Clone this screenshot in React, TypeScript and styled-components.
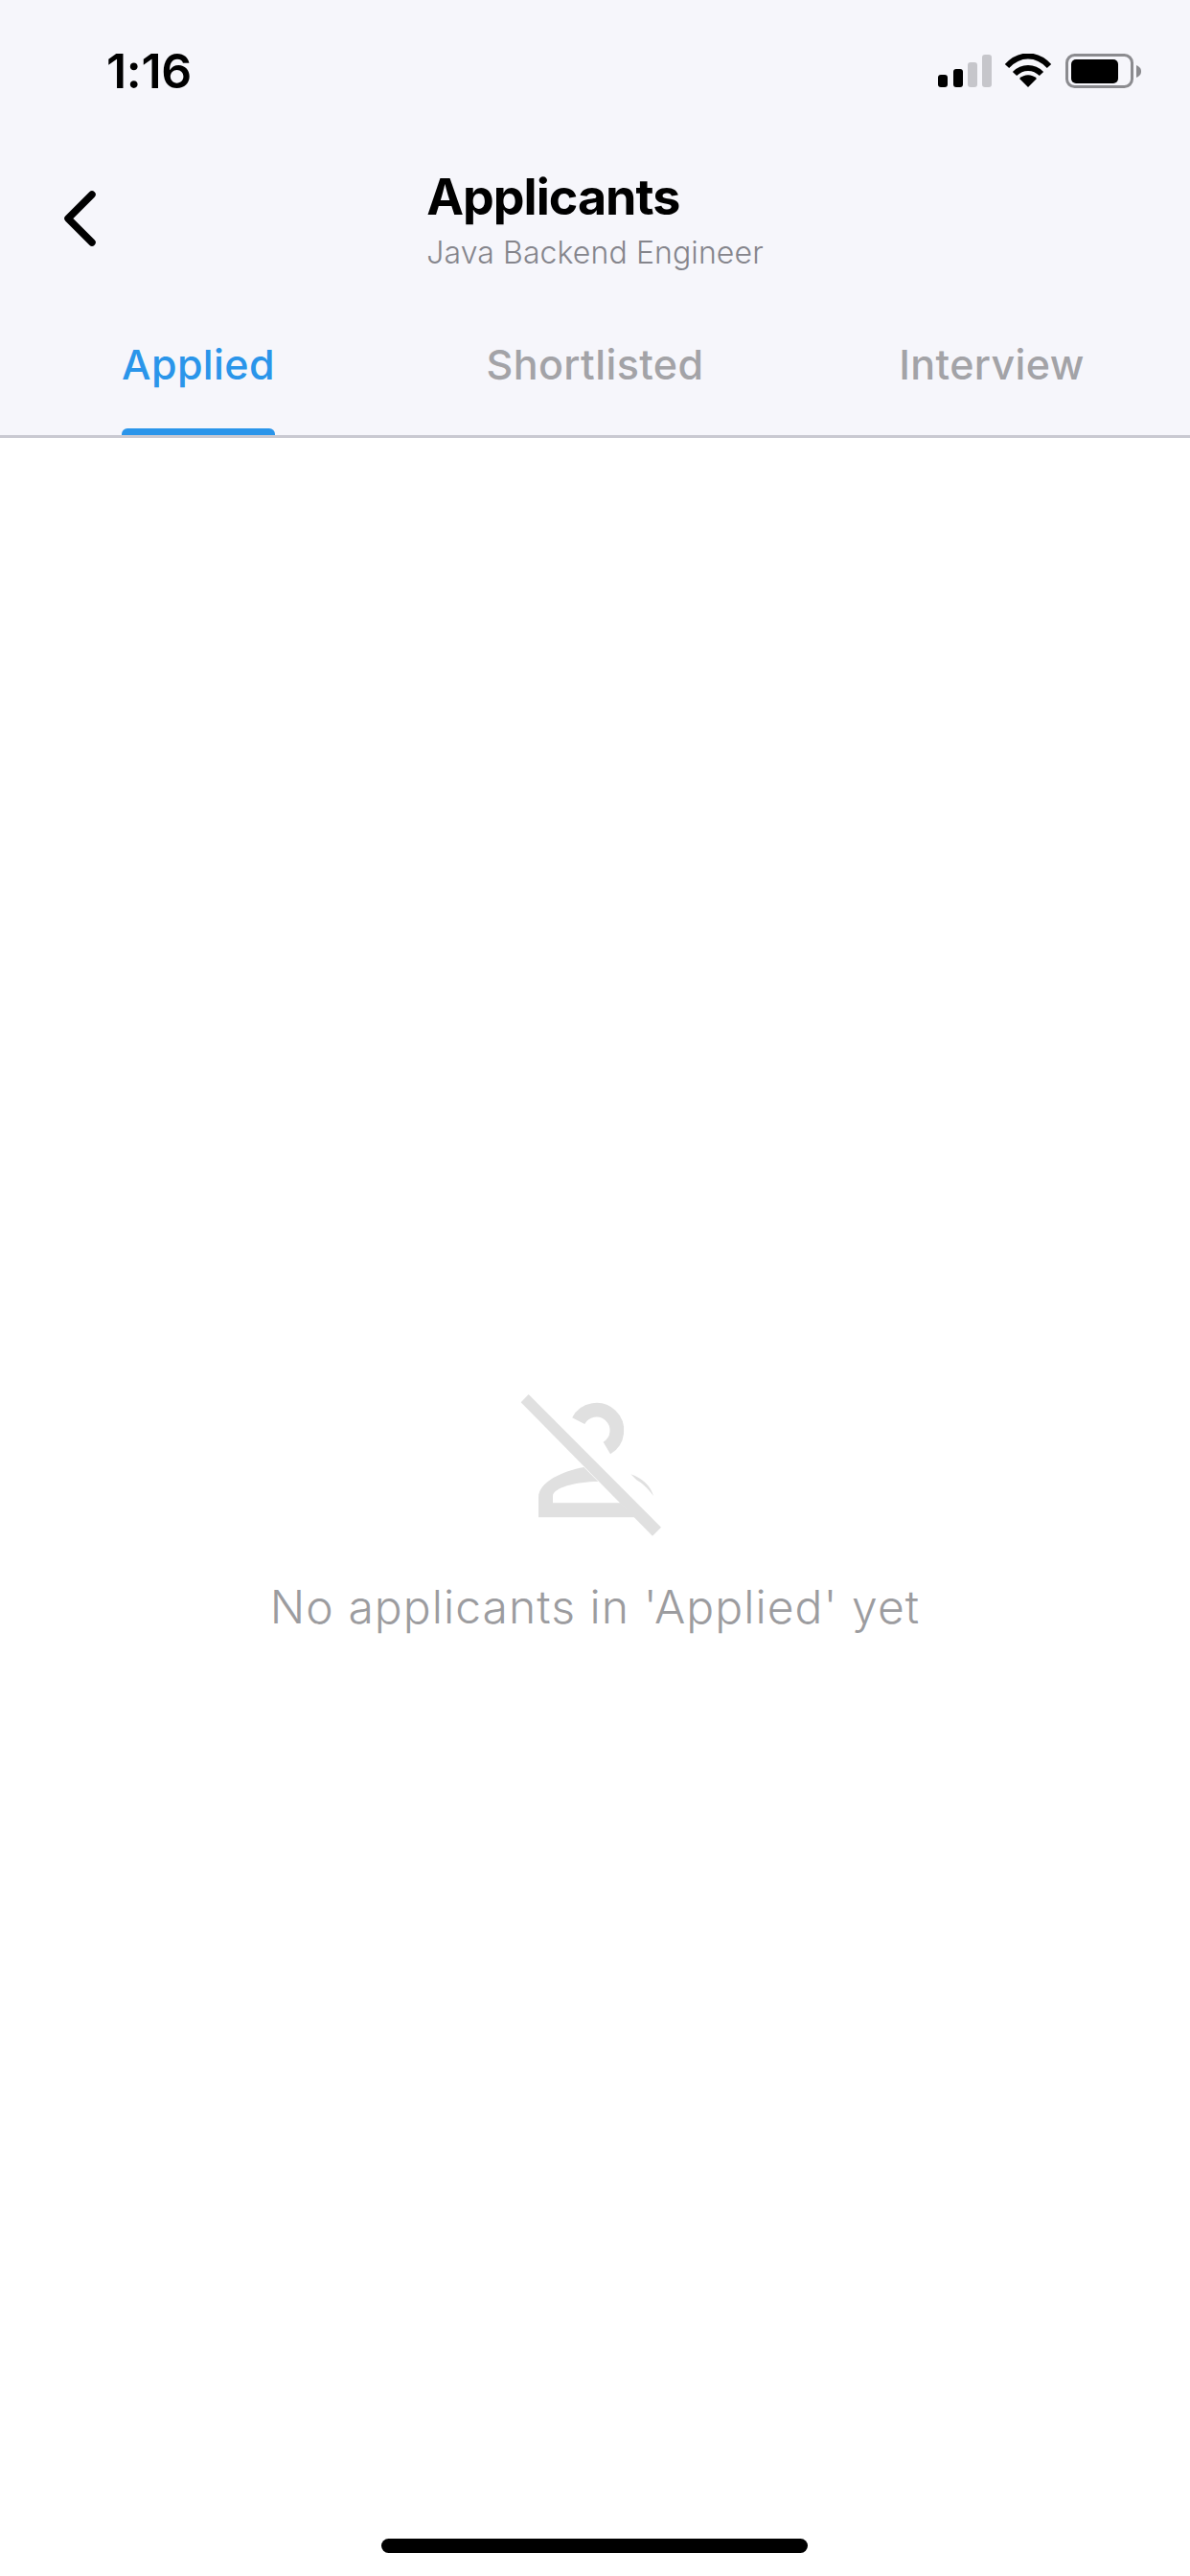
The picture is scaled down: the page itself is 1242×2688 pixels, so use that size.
import React from "react";
import styled, { createGlobalStyle } from "styled-components";

const Global = createGlobalStyle`
  html, body { margin: 0; padding: 0; background: #fff; }
  * { box-sizing: border-box; }
  #root { width: 1242px; height: 2688px; }
`;

const FONT = `Inter, "Liberation Sans", sans-serif`;

const Screen = styled.div`
  position: relative;
  width: 1242px;
  height: 2688px;
  display: flex;
  flex-direction: column;
  background: #fff;
  font-family: ${FONT};
  overflow: hidden;
`;
const Header = styled.header`
  display: flex;
  flex-direction: column;
  background: #f6f6fb;
  border-bottom: 3px solid #c9c9d1;
`;
const StatusBar = styled.div`
  height: 120px;
  display: flex;
  align-items: flex-start;
  justify-content: space-between;
  padding: 46px 51px 0 111px;
`;
const Time = styled.span`
  font-size: 50px;
  line-height: 56px;
  font-weight: 600;
  color: #000;
  letter-spacing: -0.3px;
`;
const StatusIcons = styled.svg`
  display: block;
  margin-top: 10px;
`;
const NavBar = styled.div`
  height: 216px;
  display: grid;
  grid-template-columns: 1fr auto 1fr;
  align-items: start;
`;
const BackButton = styled.div`
  padding: 78px 0 0 65px;
`;
const TitleBlock = styled.div`
  display: flex;
  flex-direction: column;
  padding-top: 56px;
`;
const Title = styled.h1`
  margin: 0;
  font-size: 52px;
  line-height: 60px;
  font-weight: 700;
  color: #000;
  letter-spacing: -1px;
`;
const Subtitle = styled.div`
  margin-top: 9px;
  font-size: 32px;
  line-height: 38px;
  font-weight: 300;
  color: #85858c;
  letter-spacing: 0.1px;
`;
const Tabs = styled.nav`
  height: 118px;
  display: grid;
  grid-template-columns: repeat(3, 1fr);
`;
const Tab = styled.div`
  display: flex;
  justify-content: center;
`;
const TabLabel = styled.div<{ $active?: boolean }>`
  position: relative;
  height: 118px;
  padding-top: 19px;
  font-size: 43px;
  line-height: 50px;
  font-weight: 500;
  letter-spacing: 0.4px;
  color: ${(p) => (p.$active ? "#2a95ea" : "#a3a3a7")};
  ${(p) =>
    p.$active &&
    `&::after {
      content: "";
      position: absolute;
      left: 0;
      right: 0;
      bottom: 0;
      height: 7px;
      border-radius: 6px 6px 0 0;
      background: #2a95ea;
    }`}
`;
const Body = styled.main`
  flex: 1;
  display: flex;
  flex-direction: column;
  align-items: center;
  padding-top: 974px;
`;
const EmptyIcon = styled.svg`
  display: block;
`;
const EmptyText = styled.p`
  margin: 18px 0 0;
  font-size: 48px;
  line-height: 56px;
  font-weight: 300;
  color: #9c9c9f;
  letter-spacing: 1.05px;
`;
const HomeIndicator = styled.div`
  position: absolute;
  left: 398px;
  bottom: 24px;
  width: 445px;
  height: 15px;
  border-radius: 8px;
  background: #000;
`;
const BackIcon = styled.svg`
  display: block;
`;

export default function App() {
  return (
    <Screen>
      <Global />
      <Header>
        <StatusBar>
          <Time>1:16</Time>
          <StatusIcons width="212" height="36" viewBox="979 56 212 36">
            <rect x="979" y="78" width="10" height="13" rx="3" fill="#000" />
            <rect x="995" y="72" width="10" height="19" rx="3" fill="#000" />
            <rect x="1010" y="65" width="10" height="26" rx="3" fill="#c6c6cb" />
            <rect x="1025" y="57" width="10" height="34" rx="3" fill="#c6c6cb" />
            <path d="M1051 69 C1064 55 1082 55 1095 69" fill="none" stroke="#000" strokeWidth="6" />
            <path d="M1059 77 C1067 69 1079 69 1087 77" fill="none" stroke="#000" strokeWidth="6" />
            <path d="M1064 82 C1069 77 1077 77 1082 82 L1073 91 Z" fill="#000" />
            <rect x="1113.5" y="57.5" width="68" height="33" rx="8" fill="none" stroke="#8b8b8f" strokeWidth="3" />
            <rect x="1118" y="62" width="49" height="25" rx="5" fill="#000" />
            <path d="M1186 68 C1190 70 1191 72 1191 74.5 C1191 77 1190 79 1186 81 Z" fill="#8b8b8f" />
          </StatusIcons>
        </StatusBar>
        <NavBar>
          <BackButton>
            <BackIcon width="38" height="62" viewBox="0 0 38 62">
              <path d="M31 5 L6 30 L31 55" fill="none" stroke="#000" strokeWidth="7.5" strokeLinecap="round" strokeLinejoin="round" />
            </BackIcon>
          </BackButton>
          <TitleBlock>
            <Title>Applicants</Title>
            <Subtitle>Java Backend Engineer</Subtitle>
          </TitleBlock>
        </NavBar>
        <Tabs>
          <Tab><TabLabel $active>Applied</TabLabel></Tab>
          <Tab><TabLabel>Shortlisted</TabLabel></Tab>
          <Tab><TabLabel>Interview</TabLabel></Tab>
        </Tabs>
      </Header>
      <Body>
        <EmptyIcon width="240" height="200" viewBox="0 0 720 600">
          <path d="M152 72 L128 97 L540 515 L567 488 Z" fill="#e0e0e0" />
          <path d="M308 155 A64 64 0 1 1 397 240" fill="none" stroke="#e0e0e0" strokeWidth="44" />
          <path d="M183 457 L183 395 C183 345 260 312 325 300 L370 345 C300 345 228 365 228 390 L228 412 L440 412 L485 457 Z" fill="#e0e0e0" />
          <path d="M472 322 C510 335 535 360 543 390 C525 365 505 348 490 340 Z" fill="#e0e0e0" />
        </EmptyIcon>
        <EmptyText>No applicants in 'Applied' yet</EmptyText>
      </Body>
      <HomeIndicator />
    </Screen>
  );
}
